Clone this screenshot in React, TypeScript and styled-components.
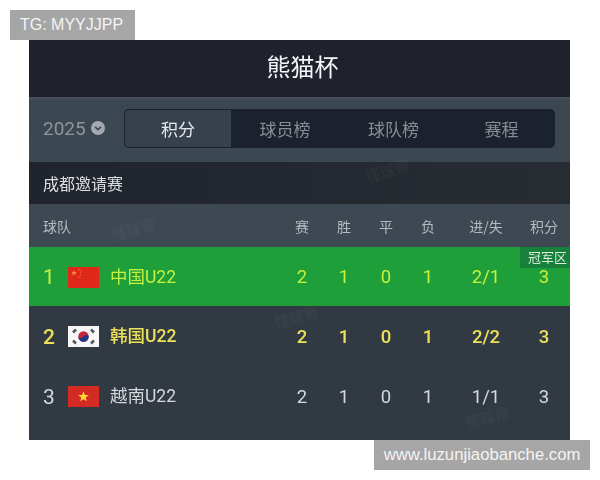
import styled, { createGlobalStyle } from 'styled-components'

const GlobalStyle = createGlobalStyle`
  html, body {
    margin: 0;
    padding: 0;
    background: #fff;
  }
  body {
    font-family: 'Liberation Sans', 'Noto Sans CJK SC', sans-serif;
  }
`

const Page = styled.div`
  width: 600px;
  height: 480px;
  overflow: hidden;
  display: flex;
  flex-direction: column;
  padding-top: 10px;
  box-sizing: border-box;
`

const Tag = styled.div<{ $end?: boolean }>`
  height: 30px;
  line-height: 30px;
  background: #a6a6a6;
  color: #f4f4f4;
  font-size: ${(p) => (p.$end ? '16.7px' : '16px')};
  box-sizing: border-box;
  align-self: ${(p) => (p.$end ? 'flex-end' : 'flex-start')};
  margin: ${(p) => (p.$end ? '0 10px 0 0' : '0 0 0 10px')};
  padding: ${(p) => (p.$end ? '0' : '0 10px')};
  width: ${(p) => (p.$end ? '216px' : '125px')};
  text-align: ${(p) => (p.$end ? 'center' : 'left')};
  white-space: nowrap;
`

const Panel = styled.div`
  position: relative;
  width: 541px;
  height: 400px;
  margin-left: 29px;
  background: #313942;
  overflow: hidden;
  font-family: 'Noto Sans CJK SC', 'Liberation Sans', sans-serif;
  filter: blur(0.35px);
`

const Title = styled.div`
  height: 57px;
  background: #1f222c;
  color: #f4f5f6;
  font-size: 24px;
  display: flex;
  align-items: center;
  justify-content: center;
  padding: 0 0 6px 6px;
  box-sizing: border-box;
`

const FilterBar = styled.div`
  height: 65px;
  background: linear-gradient(#47525c 0, #3a4650 4px, #3b4751 100%);
  display: flex;
  align-items: center;
  padding: 0 15px 3px 14px;
  box-sizing: border-box;
`

const Year = styled.div`
  width: 81px;
  display: flex;
  align-items: center;
  gap: 5px;
  color: #8e969d;
  font-family: 'Roboto', 'Liberation Sans', sans-serif;
  font-size: 19px;
`

const Tabs = styled.div`
  flex: 1;
  height: 39px;
  background: #1c222d;
  border-radius: 5px;
  display: grid;
  grid-template-columns: 107px 108px 109px 1fr;
  overflow: hidden;
`

const Tab = styled.div<{ $active?: boolean }>`
  display: flex;
  align-items: center;
  justify-content: center;
  font-size: 17px;
  color: ${(p) => (p.$active ? '#e6e8ea' : '#878d94')};
  background: ${(p) => (p.$active ? '#36414d' : 'transparent')};
  border: ${(p) => (p.$active ? '1px solid #1c222d' : '0')};
  border-right: 0;
  border-radius: ${(p) => (p.$active ? '5px 0 0 5px' : '0')};
`

const Section = styled.div`
  height: 42px;
  background: linear-gradient(90deg, #1f242d, #272d33);
  color: #dcdfe2;
  font-size: 16px;
  display: flex;
  align-items: center;
  padding-left: 14px;
`

const Grid = styled.div`
  display: grid;
  grid-template-columns: 252px 42px 42px 42px 42px 74px 42px 5px;
  align-items: center;
  box-sizing: border-box;
`

const HeadRow = styled(Grid)`
  height: 43px;
  background: #3e4852;
  color: #b6bbc0;
  font-size: 14px;
`

const Row = styled(Grid)<{ $color: string; $bg?: string; $height: number; $weight: number }>`
  position: relative;
  height: ${(p) => p.$height}px;
  padding-top: 1px;
  background: ${(p) => p.$bg ?? 'transparent'};
  color: ${(p) => p.$color};
  font-weight: ${(p) => p.$weight};
`

const Cell = styled.div`
  text-align: center;
  font-family: 'Roboto', 'Liberation Sans', sans-serif;
  font-size: 18.5px;
`

const HeadCell = styled.div<{ $left?: boolean }>`
  text-align: ${(p) => (p.$left ? 'left' : 'center')};
  padding-left: ${(p) => (p.$left ? '14px' : '0')};
`

const Team = styled.div`
  display: flex;
  align-items: center;
`

const Rank = styled.span`
  width: 39px;
  padding-left: 14px;
  box-sizing: border-box;
  font-family: 'Roboto', 'Liberation Sans', sans-serif;
  font-size: 21px;
`

const Name = styled.span`
  margin-left: 11px;
  font-family: 'Roboto', 'Noto Sans CJK SC', sans-serif;
  font-size: 17.5px;
  line-height: 21px;
`

const ZoneBadge = styled.div`
  position: absolute;
  top: 0;
  right: 0;
  width: 50px;
  height: 21px;
  line-height: 20px;
  padding-left: 5px;
  box-sizing: border-box;
  background: #17803a;
  color: #d7eadc;
  font-size: 13px;
  font-weight: 400;
  text-align: center;
  white-space: nowrap;
`

const Mark = styled.div<{ $x: number; $y: number }>`
  position: absolute;
  left: ${(p) => p.$x}px;
  top: ${(p) => p.$y}px;
  color: rgba(255, 255, 255, 0.035);
  font-size: 15px;
  line-height: 18px;
  font-weight: 700;
  transform: rotate(-15deg);
  filter: blur(0.6px);
  pointer-events: none;
`

const ChevronBadge = () => (
  <svg width="14" height="14" viewBox="0 0 14 14">
    <circle cx="7" cy="7" r="7" fill="#a3a9ae" />
    <path d="M4 5.8 7 8.6 10 5.8" fill="none" stroke="#3b4751" strokeWidth="1.6" />
  </svg>
)

const star = (cx: number, cy: number, r: number) => {
  const pts: string[] = []
  for (let i = 0; i < 10; i++) {
    const a = (Math.PI / 5) * i - Math.PI / 2
    const d = i % 2 ? r * 0.42 : r
    pts.push(`${(cx + d * Math.cos(a)).toFixed(2)},${(cy + d * Math.sin(a)).toFixed(2)}`)
  }
  return pts.join(' ')
}

const ChinaFlag = () => (
  <svg width="31" height="21" viewBox="0 0 31 21">
    <rect width="31" height="21" fill="#e0281a" />
    <polygon points={star(6, 6, 3)} fill="#f08a3c" />
    <polygon points={star(11, 2.5, 1)} fill="#f08a3c" />
    <polygon points={star(12.5, 5, 1)} fill="#f08a3c" />
    <polygon points={star(12.5, 8, 1)} fill="#f08a3c" />
    <polygon points={star(11, 10, 1)} fill="#f08a3c" />
  </svg>
)

const KoreaFlag = () => (
  <svg width="31" height="21" viewBox="0 0 31 21">
    <rect width="31" height="21" fill="#f7f7f8" />
    <circle cx="15.5" cy="10.5" r="5.2" fill="#c8243a" />
    <path d="M10.3 10.5a5.2 5.2 0 0 0 10.4 0c-1-2-3.6-2-5.2 0s-4.2 2-5.2 0z" fill="#1d3a86" />
    <g stroke="#55585f" strokeWidth="2.6">
      <path d="M5 6.5 8 3.5" />
      <path d="M23 3.5 26 6.5" />
      <path d="M5 14.5 8 17.5" />
      <path d="M23 17.5 26 14.5" />
    </g>
  </svg>
)

const VietnamFlag = () => (
  <svg width="31" height="21" viewBox="0 0 31 21">
    <rect width="31" height="21" fill="#d42a24" />
    <polygon points={star(15.5, 10.8, 5.6)} fill="#fbd934" />
  </svg>
)

const columns = ['赛', '胜', '平', '负', '进/失', '积分']

const teams = [
  {
    rank: 1,
    name: '中国U22',
    flag: <ChinaFlag />,
    stats: ['2', '1', '0', '1', '2/1', '3'],
    color: '#c5f03c',
    bg: '#1f9f3a',
    height: 59,
    weight: 400,
    champion: true,
  },
  {
    rank: 2,
    name: '韩国U22',
    flag: <KoreaFlag />,
    stats: ['2', '1', '0', '1', '2/2', '3'],
    color: '#ece05a',
    height: 60,
    weight: 500,
  },
  {
    rank: 3,
    name: '越南U22',
    flag: <VietnamFlag />,
    stats: ['2', '1', '0', '1', '1/1', '3'],
    color: '#d5d9dc',
    height: 60,
    weight: 400,
  },
]

const marks = [
  { x: 336, y: 122 },
  { x: 82, y: 180 },
  { x: 245, y: 268 },
  { x: 436, y: 368 },
]

export default function App() {
  return (
    <Page>
      <GlobalStyle />
      <Tag>TG: MYYJJPP</Tag>
      <Panel>
        <Title>熊猫杯</Title>
        <FilterBar>
          <Year>
            2025
            <ChevronBadge />
          </Year>
          <Tabs>
            <Tab $active>积分</Tab>
            <Tab>球员榜</Tab>
            <Tab>球队榜</Tab>
            <Tab>赛程</Tab>
          </Tabs>
        </FilterBar>
        <Section>成都邀请赛</Section>
        <HeadRow>
          <HeadCell $left>球队</HeadCell>
          {columns.map((c) => (
            <HeadCell key={c}>{c}</HeadCell>
          ))}
        </HeadRow>
        {teams.map((t) => (
          <Row key={t.rank} $color={t.color} $bg={t.bg} $height={t.height} $weight={t.weight}>
            <Team>
              <Rank>{t.rank}</Rank>
              {t.flag}
              <Name>{t.name}</Name>
            </Team>
            {t.stats.map((s, i) => (
              <Cell key={i}>{s}</Cell>
            ))}
            {t.champion && <ZoneBadge>冠军区</ZoneBadge>}
          </Row>
        ))}
        {marks.map((m) => (
          <Mark key={`${m.x}-${m.y}`} $x={m.x} $y={m.y}>
            懂球帝
          </Mark>
        ))}
      </Panel>
      <Tag $end>www.luzunjiaobanche.com</Tag>
    </Page>
  )
}
